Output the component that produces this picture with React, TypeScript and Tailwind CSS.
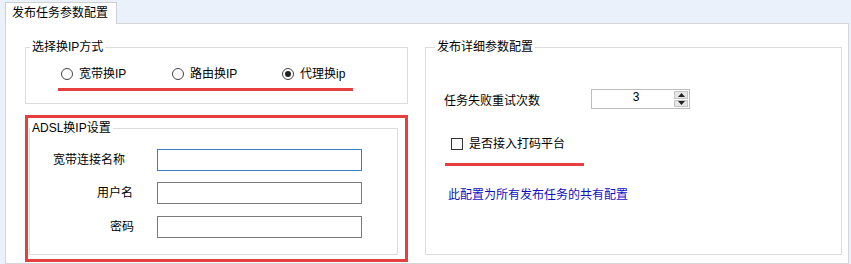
import React from 'react';

function Radio({ label, checked, width }: { label: string; checked?: boolean; width: string }) {
  return (
    <div className={`flex items-center gap-[6px] ${width}`}>
      <span className="w-[12px] h-[12px] rounded-full border border-[#444] bg-white flex items-center justify-center">
        {checked && <span className="w-[6px] h-[6px] rounded-full bg-[#222]" />}
      </span>
      <span className="leading-[16px]">{label}</span>
    </div>
  );
}

function SpinBox({ value }: { value: number }) {
  return (
    <div className="flex w-[99px] h-[20px] border border-[#bcbcbc] bg-white">
      <div className="flex-1 text-center leading-[14px] pl-[6px]">{value}</div>
      <div className="w-[15px] flex flex-col gap-px py-px pr-px">
        <div className="flex-1 bg-[#e6e6e6] border border-[#c4c4c4] flex items-center justify-center">
          <svg width="7" height="4" viewBox="0 0 7 4">
            <path d="M0 4 L3.5 0 L7 4 Z" fill="#222" />
          </svg>
        </div>
        <div className="flex-1 bg-[#e6e6e6] border border-[#c4c4c4] flex items-center justify-center">
          <svg width="7" height="4" viewBox="0 0 7 4">
            <path d="M0 0 L3.5 4 L7 0 Z" fill="#222" />
          </svg>
        </div>
      </div>
    </div>
  );
}

export default function App() {
  return (
    <div className="w-[851px] h-[264px] overflow-hidden bg-[#eaf1fa] flex flex-col pt-[2px] pl-[5px] pr-[2px] text-[12px] text-black font-['Liberation_Sans','Noto_Sans_CJK_SC',sans-serif]">
      {/* Tab header */}
      <div className="relative z-10 -mb-px w-[112px] h-[22px] bg-white border-t border-x border-[#cfcfcf] leading-[21px] pl-[6px]">
        发布任务参数配置
      </div>

      {/* Tab page */}
      <div className="flex-1 bg-white border border-[#d5d5d5] flex pl-[19px] pt-[16px]">
        {/* Left column */}
        <div className="w-[383px] flex flex-col">
          <fieldset className="h-[64px] border border-[#dcdcdc]">
            <legend className="ml-[4px] px-[2px] leading-[14px]">选择换IP方式</legend>
            <div className="flex pl-[35px] mt-[12px]">
              <Radio label="宽带换IP" width="w-[111px]" />
              <Radio label="路由换IP" width="w-[110px]" />
              <Radio label="代理换ip" width="w-[80px]" checked />
            </div>
            <div className="ml-[32px] mt-[6px] w-[295px] h-[3px] bg-[#e5403f]" />
          </fieldset>

          <div className="mt-[11px] h-[147px] border-[3px] border-[#e5403f]">
            <fieldset className="ml-[1px] mt-[3px] w-[369px] h-[134px] border border-[#dcdcdc]">
              <legend className="px-[2px] leading-[14px]">ADSL换IP设置</legend>
              <div className="grid grid-cols-[127px_205px] items-center gap-y-[11px] mt-[14px]">
                <label className="text-right pr-[32px] leading-[16px]">宽带连接名称</label>
                <input className="h-[22px] border border-[#3b7dc0] outline-none bg-white" />
                <label className="text-right pr-[24px] leading-[16px]">用户名</label>
                <input className="h-[22px] border border-[#7a7a7a] outline-none bg-white" />
                <label className="text-right pr-[23px] leading-[16px] mt-px">密码</label>
                <input className="h-[22px] border border-[#7a7a7a] outline-none bg-white mt-px" />
              </div>
            </fieldset>
          </div>
        </div>

        {/* Right column */}
        <div className="ml-[17px] w-[417px]">
          <fieldset className="h-[215px] border border-[#dcdcdc]">
            <legend className="ml-[9px] px-[2px] leading-[14px]">发布详细参数配置</legend>
            <div className="flex items-center pl-[18px] mt-[35px]">
              <span className="w-[147px] leading-[16px] pt-[4px]">任务失败重试次数</span>
              <SpinBox value={3} />
            </div>
            <div className="flex items-center gap-[6px] pl-[25px] mt-[27px]">
              <span className="w-[12px] h-[12px] border border-[#333] bg-white" />
              <span className="leading-[16px]">是否接入打码平台</span>
            </div>
            <div className="ml-[19px] mt-[11px] w-[139px] h-[3px] bg-[#e5403f]" />
            <div className="ml-[22px] mt-[21px] leading-[16px] text-[#0f0fc0]">此配置为所有发布任务的共有配置</div>
          </fieldset>
        </div>
      </div>
    </div>
  );
}
